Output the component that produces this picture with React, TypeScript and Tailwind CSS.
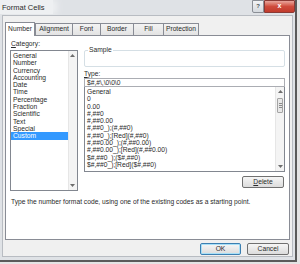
const categories = ["General", "Number", "Currency", "Accounting", "Date", "Time", "Percentage", "Fraction", "Scientific", "Text", "Special", "Custom"]

const formats = [
    "General",
    "0",
    "0.00",
    "#,##0",
    "#,##0.00",
    "#,##0_);(#,##0)",
    "#,##0_);[Red](#,##0)",
    "#,##0.00_);(#,##0.00)",
    "#,##0.00_);[Red](#,##0.00)",
    "$#,##0_);($#,##0)",
    "$#,##0_);[Red]($#,##0)",
]

const tabs = [
    { label: "Number", w: "w-[30px]" },
    { label: "Alignment", w: "w-[37px]" },
    { label: "Font", w: "w-[28px]" },
    { label: "Border", w: "w-[33px]" },
    { label: "Fill", w: "w-[30px]" },
    { label: "Protection", w: "w-[36px]" },
]

function Arrow({ up }: { up?: boolean }) {
    return (
        <svg width="5" height="3" viewBox="0 0 5 3" className="block">
            <path d={up ? "M0 3 L2.5 0 L5 3 Z" : "M0 0 L2.5 3 L5 0 Z"} fill="#6d6d6d" />
        </svg>
    )
}

function ScrollBar({ thumb }: { thumb?: boolean }) {
    return (
        <div className="flex flex-col w-[9px] h-full bg-[#f4f4f4] border-l border-[#e6e6e6]">
            <div className="h-[9px] flex items-center justify-center">
                <Arrow up />
            </div>
            {thumb && (
                <div className="mt-[2px] h-[15px] mx-[1px] rounded-[1px] border border-[#a4a4a4] bg-[#e8e8e8] flex flex-col items-center justify-center gap-[1px]">
                    <div className="w-[3px] h-px bg-[#8a8a8a]" />
                    <div className="w-[3px] h-px bg-[#8a8a8a]" />
                    <div className="w-[3px] h-px bg-[#8a8a8a]" />
                </div>
            )}
            <div className="flex-1" />
            <div className="h-[9px] flex items-center justify-center">
                <Arrow />
            </div>
        </div>
    )
}

function Button({ children, primary, className }: { children: React.ReactNode, primary?: boolean, className?: string }) {
    return (
        <div className={`h-[12px] flex items-center justify-center rounded-[2px] border bg-gradient-to-b from-[#f6f6f6] to-[#dcdcdc] text-[6.7px] text-[#2a2a2a] ${primary ? "border-[#3c7fb1] shadow-[inset_0_0_0_1px_#a8e0f8]" : "border-[#707070]"} ${className ?? ""}`}>
            {children}
        </div>
    )
}

export default function App() {
    return (
        <div className="w-[300px] h-[264px] bg-[#e4e4e4] overflow-hidden font-['Liberation_Sans',Arial,sans-serif] text-[#2a2a2a]">
            <div className="w-[297px] h-[262px] flex flex-col bg-[#dfe2e6] border-r-[2px] border-b-[2px] border-[#5a5a5a]">
                {/* title bar */}
                <div className="h-[15px] flex flex-row items-start">
                    <div className="pl-[2px] pt-[3px] pr-[8px] h-[14px] bg-[#eef0f2] shadow-[4px_0_6px_#eef0f2] text-[7.5px] leading-[9px]">Format Cells</div>
                    <div className="flex-1" />
                    <div className="w-[12px] h-[13px] border border-[#8b8f96] rounded-bl-[2px] bg-gradient-to-b from-[#f2f3f5] to-[#d5d9de] flex items-center justify-center text-[6px] font-bold text-[#4c4f54]">?</div>
                    <div className="w-[31px] h-[13px] border border-[#8a3a35] rounded-br-[2px] bg-gradient-to-b from-[#e7a59c] via-[#cf4b3c] to-[#c13b2c] flex items-center justify-center text-[7px] font-bold text-white">x</div>
                </div>
                {/* client area */}
                <div className="flex-1 ml-[2px] mr-[2px] mb-[3px] bg-[#f0f0f0] border border-[#b8bcc2] flex flex-col px-[2px]">
                    {/* tabs */}
                    <div className="mt-[5px] h-[14px] flex flex-row items-end">
                        {tabs.map((t, i) => (
                            <div
                                key={t.label}
                                className={`${t.w} flex items-center justify-center text-[6.7px] border-t border-l border-[#898c95] ${i === tabs.length - 1 ? "border-r" : ""} ${i === 0 ? "h-[14px] bg-white border-r relative top-px z-10" : "h-[12px] bg-gradient-to-b from-[#f3f3f3] to-[#e3e3e3]"}`}
                            >
                                {t.label}
                            </div>
                        ))}
                    </div>
                    {/* panel */}
                    <div className="h-[205px] bg-white border border-[#898c95] flex flex-col px-[4px]">
                        <div className="flex flex-row mt-[4px]">
                            <div className="flex flex-col w-[69px]">
                                <div className="text-[6.7px] leading-[8px] ml-[1px]"><span className="underline">C</span>ategory:</div>
                                <div className="mt-[2px] h-[141px] border border-[#828790] flex flex-row">
                                    <div className="flex-1 flex flex-col pt-[1px] text-[6.7px] leading-[7.3px]">
                                        {categories.map((c) => (
                                            <div key={c} className={`pl-[2px] ${c === "Custom" ? "bg-[#3399ff] text-white" : ""}`}>{c}</div>
                                        ))}
                                    </div>
                                    <ScrollBar />
                                </div>
                            </div>
                            <div className="flex flex-col ml-[6px] w-[204px]">
                                <div className="mt-[10px] h-[17px] border border-[#d5dfe5] rounded-[2px] relative">
                                    <div className="absolute -top-[5px] left-[3px] bg-white px-px text-[6.7px] leading-[8px]">Sample</div>
                                </div>
                                <div className="mt-[3px] text-[6.7px] leading-[8px]"><span className="underline">T</span>ype:</div>
                                <div className="h-[9px] border border-[#abadb3] text-[6.7px] leading-[7px] pl-[2px]">$#,#\,\0\0\0</div>
                                <div className="h-[85px] border border-[#828790] border-t-0 flex flex-row">
                                    <div className="flex-1 flex flex-col pt-[1px] text-[6.7px] leading-[7.3px]">
                                        {formats.map((f) => (
                                            <div key={f} className="pl-[2px] whitespace-nowrap">{f}</div>
                                        ))}
                                    </div>
                                    <ScrollBar thumb />
                                </div>
                                <div className="flex flex-row justify-end mt-[4px]">
                                    <Button className="w-[42px] mr-px"><span className="underline">D</span>elete</Button>
                                </div>
                            </div>
                        </div>
                        <div className="mt-[7px] ml-[1px] text-[6.7px] leading-[8px] whitespace-nowrap">Type the number format code, using one of the existing codes as a starting point.</div>
                    </div>
                    {/* footer buttons */}
                    <div className="flex flex-row justify-end gap-[6px] mt-[3px] mr-[1px]">
                        <Button primary className="w-[41px]">OK</Button>
                        <Button className="w-[42px]">Cancel</Button>
                    </div>
                </div>
            </div>
        </div>
    )
}
